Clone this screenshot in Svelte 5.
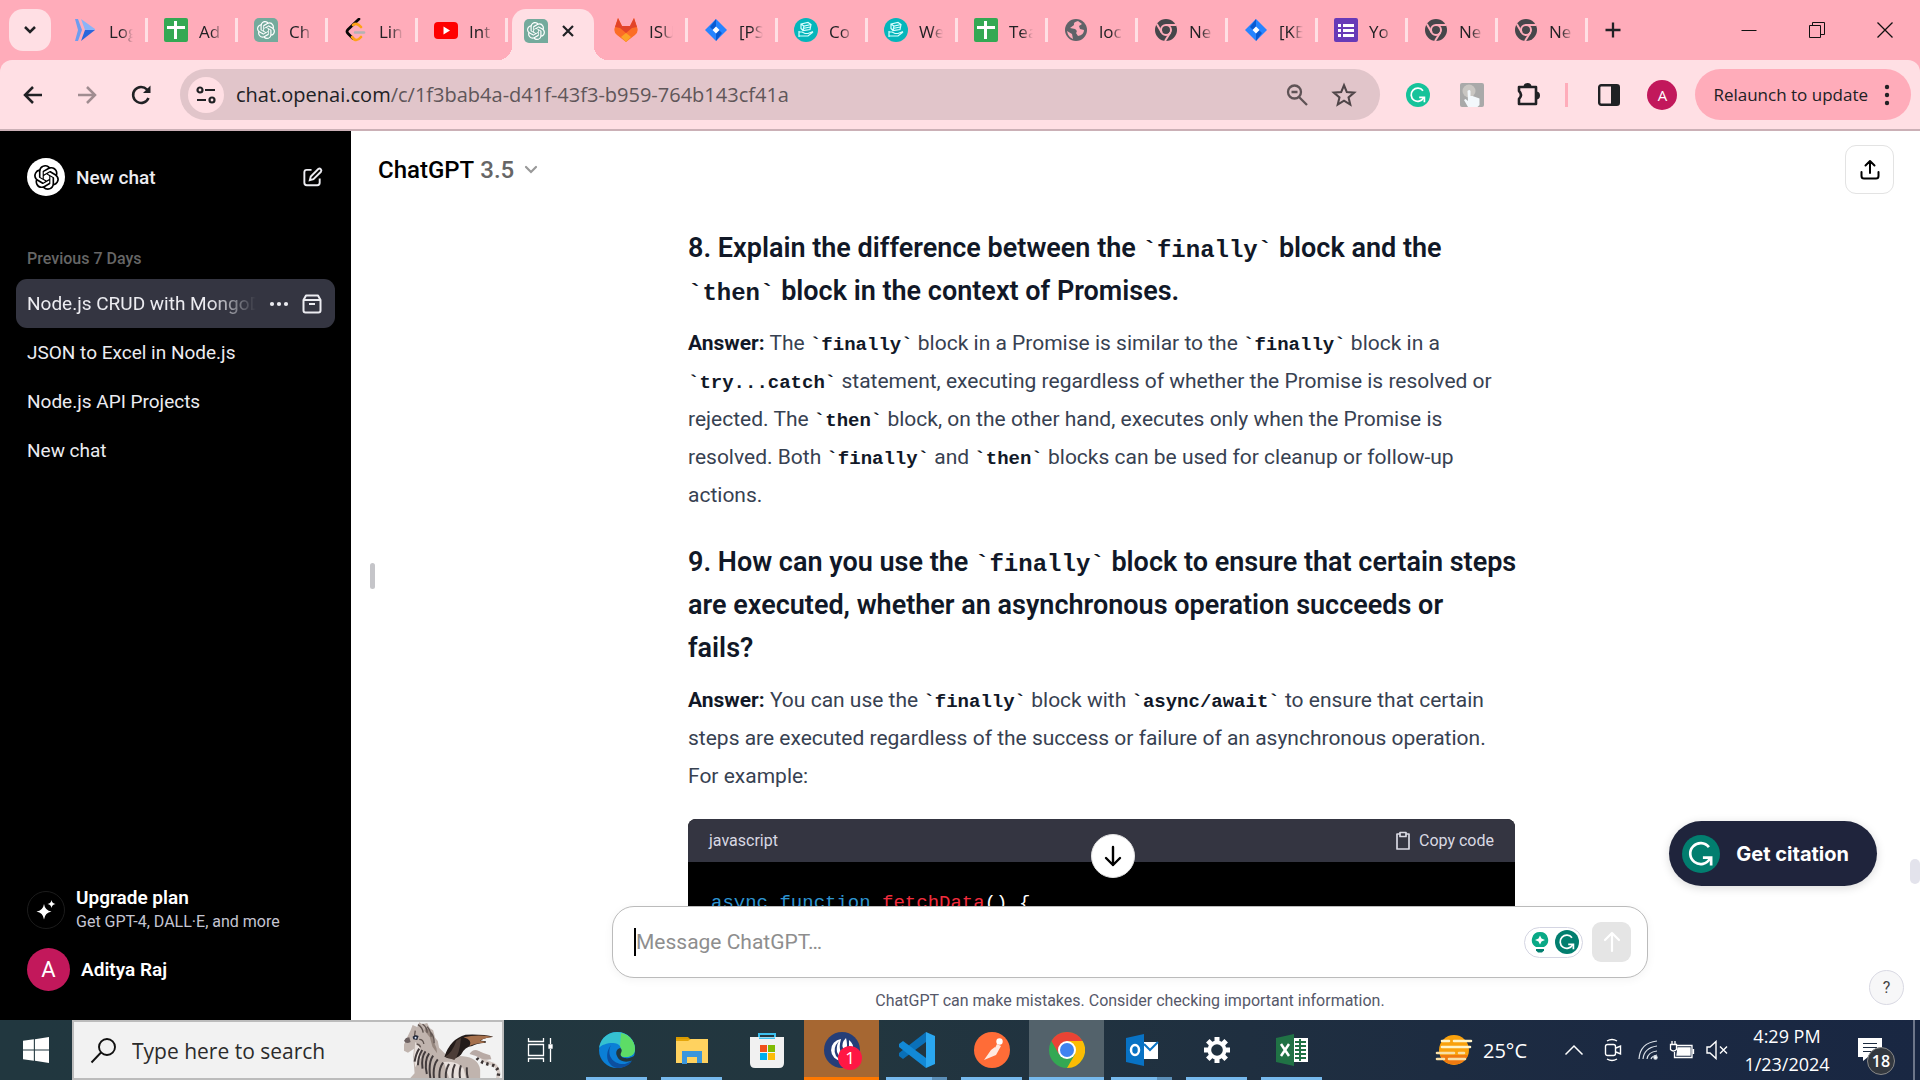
<script lang="ts">
  type Tab = { icon: string; title: string };
  const tabsBefore: Tab[] = [
    { icon: 'flow', title: 'Log' },
    { icon: 'sheets', title: 'Ad' },
    { icon: 'gpt', title: 'Ch' },
    { icon: 'leet', title: 'Lin' },
    { icon: 'youtube', title: 'Int' }
  ];
  const tabsAfter: Tab[] = [
    { icon: 'gitlab', title: 'ISU' },
    { icon: 'jira', title: '[PS' },
    { icon: 'coin', title: 'Co' },
    { icon: 'coin', title: 'We' },
    { icon: 'sheets', title: 'Tea' },
    { icon: 'globe', title: 'loc' },
    { icon: 'chrome', title: 'Ne' },
    { icon: 'jira', title: '[KE' },
    { icon: 'forms', title: 'Yo' },
    { icon: 'chrome', title: 'Ne' },
    { icon: 'chrome', title: 'Ne' }
  ];
  const chats = ['Node.js CRUD with MongoD', 'JSON to Excel in Node.js', 'Node.js API Projects', 'New chat'];
  const apps = [
    { name: 'Microsoft Edge', icon: 'edge', state: 'open' },
    { name: 'File Explorer', icon: 'explorer', state: 'open' },
    { name: 'Microsoft Store', icon: 'store', state: '' },
    { name: 'Mattermost', icon: 'mattermost', state: 'alert' },
    { name: 'Visual Studio Code', icon: 'vscode', state: 'open multi' },
    { name: 'Postman', icon: 'postman', state: 'open' },
    { name: 'Google Chrome', icon: 'chromecolor', state: 'current' },
    { name: 'Outlook', icon: 'outlook', state: 'open multi' },
    { name: 'Settings', icon: 'gear', state: 'open' },
    { name: 'Excel', icon: 'excel', state: 'open' }
  ];
  const stripes = ['M112 80q-10 15-14 39', 'M121 84q-12 18-13 46', 'M131 88q-14 18-9 52', 'M142 94q-16 22-7 62', 'M154 101q-16 22-8 70', 'M168 112q-18 22-10 66', 'M184 122q-16 22-9 58', 'M202 126q-14 22-8 54', 'M220 127q-12 22-5 53', 'M238 130q-8 22 0 50', 'M256 136q-2 20 6 44'];
  let message = $state('');
</script>

{#snippet knot()}
  <path d="M22.2819 9.8211a5.9847 5.9847 0 0 0-.5157-4.9108 6.0462 6.0462 0 0 0-6.5098-2.9A6.0651 6.0651 0 0 0 4.9807 4.1818a5.9847 5.9847 0 0 0-3.9977 2.9 6.0462 6.0462 0 0 0 .7427 7.0966 5.98 5.98 0 0 0 .511 4.9107 6.051 6.051 0 0 0 6.5146 2.9001A5.9847 5.9847 0 0 0 13.2599 24a6.0557 6.0557 0 0 0 5.7718-4.2058 5.9894 5.9894 0 0 0 3.9977-2.9001 6.0557 6.0557 0 0 0-.7475-7.0729zm-9.022 12.6081a4.4755 4.4755 0 0 1-2.8764-1.0408l.1419-.0804 4.7783-2.7582a.7948.7948 0 0 0 .3927-.6813v-6.7369l2.02 1.1686a.071.071 0 0 1 .038.052v5.5826a4.504 4.504 0 0 1-4.4945 4.4944zm-9.6607-4.1254a4.4708 4.4708 0 0 1-.5346-3.0137l.142.0852 4.783 2.7582a.7712.7712 0 0 0 .7806 0l5.8428-3.3685v2.3324a.0804.0804 0 0 1-.0332.0615L9.74 19.9502a4.4992 4.4992 0 0 1-6.1408-1.6464zM2.3408 7.8956a4.485 4.485 0 0 1 2.3655-1.9728V11.6a.7664.7664 0 0 0 .3879.6765l5.8144 3.3543-2.0201 1.1685a.0757.0757 0 0 1-.071 0l-4.8303-2.7865A4.504 4.504 0 0 1 2.3408 7.872zm16.5963 3.8558L13.1038 8.364 15.1192 7.2a.0757.0757 0 0 1 .071 0l4.8303 2.7913a4.4944 4.4944 0 0 1-.6765 8.1042v-5.6772a.79.79 0 0 0-.407-.667zm2.0107-3.0231l-.142-.0852-4.7735-2.7818a.7759.7759 0 0 0-.7854 0L9.409 9.2297V6.8974a.0662.0662 0 0 1 .0284-.0615l4.8303-2.7866a4.4992 4.4992 0 0 1 6.6802 4.66zM8.3065 12.863l-2.02-1.1638a.0804.0804 0 0 1-.038-.0567V6.0742a4.4992 4.4992 0 0 1 7.3757-3.4537l-.142.0805L8.704 5.459a.7948.7948 0 0 0-.3927.6813zm1.0976-2.3654l2.602-1.4998 2.6069 1.4998v2.9994l-2.5974 1.4997-2.6067-1.4997Z" />
{/snippet}

{#snippet grammarly(color: string)}
  <circle cx="12" cy="12" r="12" fill={color} />
  <g fill="none" stroke="#fff" stroke-width="1.7"><path d="M17 7.7a6.6 6.6 0 1 0 .6 7.2" /><path d="M13.2 14.3h5.2v5" /></g>
{/snippet}

{#snippet favicon(kind: string)}
  <svg class="favicon" viewBox="0 0 24 24" aria-hidden="true">
    {#if kind === 'flow'}
      <path d="M1 1h3l4 11-4 11H1l3-11z" fill="#6d9df0" /><path d="M7 1l14 10v1H11z" fill="#8ab4f8" /><path d="M7 23l14-11H11z" fill="#2a66dc" />
    {:else if kind === 'sheets'}
      <rect width="24" height="24" rx="2" fill="#34a853" /><path d="M10 3h3v5h8v3h-8v10h-3V11H3V8h7z" fill="#fff" />
    {:else if kind === 'gpt'}
      <path d="M5 0h14a5 5 0 0 1 5 5v19H5a5 5 0 0 1-5-5V5a5 5 0 0 1 5-5z" fill="#74aa9c" /><g fill="#fff" transform="translate(3 3) scale(.75)">{@render knot()}</g>
    {:else if kind === 'leet'}
      <path d="M15 1L4 11.500q-2 2 0 4l5 5" fill="none" stroke="#070706" stroke-width="2.700" stroke-linecap="round" /><path d="M9 7q4-3 8 2M8 19q4 6 9 0" fill="none" stroke="#ffa116" stroke-width="2.700" stroke-linecap="round" /><path d="M11 14.500h9" stroke="#b3b3b3" stroke-width="2.500" stroke-linecap="round" />
    {:else if kind === 'youtube'}
      <rect y="4" width="24" height="17" rx="4" fill="#f00" /><path d="M9.500 8.500l6.500 4-6.500 4z" fill="#fff" />
    {:else if kind === 'gitlab'}
      <path d="M1 9L4 0l4 8h8l4-8 3 9q2 5-2 8l-9 7-9-7q-4-3-2-8z" fill="#fc6d26" /><path d="M1 9L4 0l4 8h8l4-8 3 9-5 1-6 5-6-5z" fill="#e24329" /><path d="M7 19l5-4 5 4-5 5z" fill="#fca326" />
    {:else if kind === 'jira'}
      <path d="M12 1l11 11-11 11L1 12z" fill="#2684ff" /><path d="M12 1v8l-3 3-3-3zM12 23v-8l3-3 3 3z" fill="#0b5ad1" /><path d="M12 8.500l3.500 3.500-3.500 3.500L8.500 12z" fill="#fff" />
    {:else if kind === 'coin'}
      <circle cx="12" cy="12" r="12" fill="#05b6bb" /><g fill="none" stroke="#d9ffff" stroke-width="1.200"><path d="M7 6l7-1.500 3 2-1 5-7 1-2-2zM7 6l3 2 7-1.500M10 8l-1 4.500M9 10.500l7-1.500M5 14h3l3 1.500h3l5-2M5 18h9l5-4M5 13v6" /></g>
    {:else if kind === 'globe'}
      <circle cx="12" cy="12" r="11" fill="#5f6368" /><path d="M14 3q-5 1-4 4l-4 3 5 1q3 2 1 4l2 3q6-1 6-6l-4-1-1-3 3-2zM3 13l5 3 1 5q-5-2-6-8z" fill="#ffacba" />
    {:else if kind === 'chrome'}
      <circle cx="12" cy="12" r="11" fill="#46464a" /><circle cx="12" cy="12" r="5" fill="none" stroke="#ffacba" stroke-width="2" /><path d="M12 7h10M7.700 14.500L2.800 6M16.300 14.500L11 23" stroke="#ffacba" stroke-width="2" />
    {:else if kind === 'forms'}
      <rect width="24" height="24" rx="2" fill="#673ab7" /><path d="M4 6h3v3H4zm5 0h11v3H9zM4 11h3v3H4zm5 0h11v3H9zM4 16h3v3H4zm5 0h11v3H9z" fill="#fff" />
    {/if}
  </svg>
{/snippet}

{#snippet tab(t: Tab)}
  <button class="tab" role="tab" aria-selected="false">
    {@render favicon(t.icon)}<span class="tab-title">{t.title}</span>
  </button>
{/snippet}

<div class="window">
  <header class="browser">
    <div class="tabstrip">
      <button class="tab-search" aria-label="Search tabs"><svg width="14" height="10" viewBox="0 0 14 10"><path d="M2 2l5 5 5-5" fill="none" stroke="#202124" stroke-width="2.500" /></svg></button>
      <div class="tabs" role="tablist">
        {#each tabsBefore as t}{@render tab(t)}{/each}
        <div class="tab active" role="tab" aria-selected="true" tabindex="0">
          {@render favicon('gpt')}
          <button class="bare" aria-label="Close tab"><svg width="16" height="16" viewBox="0 0 16 16"><path d="M3 3l10 10M13 3L3 13" stroke="#202124" stroke-width="2.200" /></svg></button>
        </div>
        {#each tabsAfter as t}{@render tab(t)}{/each}
      </div>
      <button class="bare new-tab" aria-label="New tab"><svg width="18" height="18" viewBox="0 0 18 18"><path d="M9 1.500v15M1.500 9h15" stroke="#202124" stroke-width="2.300" /></svg></button>
      <div class="win-controls">
        <button class="bare" aria-label="Minimize"><svg width="18" height="18" viewBox="0 0 18 18"><path d="M1.500 9.500h15" stroke="#111" /></svg></button>
        <button class="bare" aria-label="Restore"><svg width="18" height="18" viewBox="0 0 18 18" fill="none" stroke="#111"><path d="M1.500 4.500h11v12h-11zM4.500 4.500v-3h12v12h-4" /></svg></button>
        <button class="bare" aria-label="Close"><svg width="18" height="18" viewBox="0 0 18 18"><path d="M1.500 1.500l15 15M16.500 1.500l-15 15" stroke="#111" stroke-width="1.300" /></svg></button>
      </div>
    </div>

    <div class="toolbar">
      <nav class="nav">
        <button class="bare" aria-label="Back"><svg width="22" height="22" viewBox="0 0 22 22"><path d="M20 11H4M11 3l-8 8 8 8" fill="none" stroke="#202124" stroke-width="2.500" /></svg></button>
        <button class="bare" aria-label="Forward"><svg width="22" height="22" viewBox="0 0 22 22"><path d="M2 11h16M11 3l8 8-8 8" fill="none" stroke="#a08c90" stroke-width="2.500" /></svg></button>
        <button class="bare" aria-label="Reload"><svg width="22" height="22" viewBox="0 0 22 22"><path d="M18.500 14a8 8 0 1 1-1.500-8.500l2 2" fill="none" stroke="#202124" stroke-width="2.500" /><path d="M20.500 1.500v7.500H13z" fill="#202124" /></svg></button>
      </nav>
      <div class="omnibox">
        <button class="site" aria-label="Site information"><svg width="20" height="20" viewBox="0 0 20 20" fill="none" stroke="#202124" stroke-width="2.200"><circle cx="4" cy="5" r="2.500" /><path d="M9 5h10M1 15h9" /><circle cx="16" cy="15" r="2.500" /></svg></button>
        <a class="url" href="#chat"><span class="host">chat.openai.com</span>/c/1f3bab4a-d41f-43f3-b959-764b143cf41a</a>
        <button class="bare" aria-label="Zoom"><svg width="24" height="24" viewBox="0 0 24 24" fill="none" stroke="#5f5356" stroke-width="2.300"><circle cx="9.500" cy="9" r="6.500" /><path d="M6.500 9h6M14 14l8 8" /></svg></button>
        <button class="bare" aria-label="Bookmark this tab"><svg width="26" height="26" viewBox="0 0 24 24"><path d="M12 3l2.600 6.300 6.800.500-5.200 4.400 1.600 6.700L12 17.300 6.200 20.900l1.600-6.700-5.200-4.400 6.800-.500z" fill="none" stroke="#4f4548" stroke-width="1.900" /></svg></button>
      </div>
      <div class="extensions">
        <button class="bare" aria-label="Grammarly"><svg width="24" height="24" viewBox="0 0 24 24">{@render grammarly('#15c39a')}</svg></button>
        <button class="bare" aria-label="Clicker"><svg width="24" height="24" viewBox="0 0 24 24"><rect width="24" height="24" rx="2" fill="#a9a9a9" /><circle cx="9" cy="8" r="6.500" fill="#c9c6c2" /><path d="M7.500 8q2-2 3 0v5h2l7 2.500V22l-2 2H8l-4-7 1.500-1L8 18z" fill="#f3f8fc" /></svg></button>
        <button class="bare" aria-label="Extensions"><svg width="28" height="28" viewBox="0 0 28 28"><path d="M5 6h17v17H5v-5q4-4 0-8z" fill="none" stroke="#202124" stroke-width="2.600" stroke-linejoin="round" /><path d="M9.500 6a4 4 0 0 1 8 0zM22 10.500a4 4 0 0 1 0 8z" fill="#202124" /></svg></button>
        <span class="divider"></span>
        <button class="bare" aria-label="Side panel"><svg width="22" height="22" viewBox="0 0 22 22"><rect x="1.200" y="1.200" width="19.600" height="19.600" rx="2" fill="none" stroke="#202124" stroke-width="2.400" /><path d="M13 1h8v20h-8z" fill="#202124" /></svg></button>
        <button class="profile" aria-label="Profile">A</button>
      </div>
      <button class="relaunch">Relaunch to update <svg width="6" height="22" viewBox="0 0 6 22" fill="#202124"><circle cx="3" cy="3" r="2.200" /><circle cx="3" cy="11" r="2.200" /><circle cx="3" cy="19" r="2.200" /></svg></button>
    </div>
  </header>

  <div class="page">
    <aside class="sidebar">
      <button class="side-row new-chat">
        <span class="logo"><svg width="25" height="25" viewBox="0 0 24 24">{@render knot()}</svg></span>
        <span class="grow">New chat</span>
        <svg width="23" height="23" viewBox="0 0 24 24" fill="none" stroke="#ececf1" stroke-width="2"><path d="M11 4H6a2.500 2.500 0 0 0-2.500 2.500v11A2.500 2.500 0 0 0 6 20h11a2.500 2.500 0 0 0 2.500-2.500V13" /><path d="M18 3.200a2 2 0 0 1 2.800 2.800L13 13.800l-3.800 1 1-3.800z" /></svg>
      </button>
      <h2>Previous 7 Days</h2>
      <ul>
        {#each chats as chat, i}
          <li class:selected={i === 0}>
            <a href="#chat">{chat}</a>
            {#if i === 0}
              <button class="bare" aria-label="More"><svg width="20" height="20" viewBox="0 0 20 20" fill="#ececf1"><circle cx="3" cy="10" r="2.100" /><circle cx="10" cy="10" r="2.100" /><circle cx="17" cy="10" r="2.100" /></svg></button>
              <button class="bare" aria-label="Archive"><svg width="20" height="20" viewBox="0 0 20 20" fill="none" stroke="#ececf1" stroke-width="2" stroke-linejoin="round"><path d="M1.500 6L4 1.500h12L18.500 6v10.500a2 2 0 0 1-2 2h-13a2 2 0 0 1-2-2zM1.500 6h17M7 10h6" /></svg></button>
            {/if}
          </li>
        {/each}
      </ul>
      <button class="side-row upgrade">
        <span class="ring"><svg width="20" height="20" viewBox="0 0 20 20" fill="#fff"><path d="M8 4q1 6.500 7.500 7.500Q9 12.500 8 19.500 7 12.500.500 11.500 7 10.500 8 4zM15.500 0q.500 3.500 4 4-3.500.500-4 4-.500-3.500-4-4 3.500-.500 4-4z" /></svg></span>
        <span class="upgrade-text"><strong>Upgrade plan</strong><small>Get GPT-4, DALL·E, and more</small></span>
      </button>
      <button class="side-row account"><span class="avatar">A</span><strong>Aditya Raj</strong></button>
    </aside>

    <main>
      <div class="topbar">
        <button class="bare model">ChatGPT <span>3.5</span><svg width="14" height="10" viewBox="0 0 14 10"><path d="M2 2l5 5 5-5" fill="none" stroke="#999" stroke-width="2.200" stroke-linecap="round" /></svg></button>
        <button class="share" aria-label="Share"><svg width="22" height="22" viewBox="0 0 22 22" fill="none" stroke="#000" stroke-width="2" stroke-linecap="round" stroke-linejoin="round"><path d="M11 14V2.500M6.500 6.500L11 2l4.500 4.500M2.500 13v4a2.500 2.500 0 0 0 2.500 2.500h12a2.500 2.500 0 0 0 2.500-2.500v-4" /></svg></button>
      </div>
      <div class="thread">
        <article>
          <h3>8. Explain the difference between the <code>`finally`</code> block and the <br /><code>`then`</code> block in the context of Promises.</h3>
          <p><strong>Answer:</strong> The <code>`finally`</code> block in a Promise is similar to the <code>`finally`</code> block in a <br /><code>`try...catch`</code> statement, executing regardless of whether the Promise is resolved or <br />rejected. The <code>`then`</code> block, on the other hand, executes only when the Promise is <br />resolved. Both <code>`finally`</code> and <code>`then`</code> blocks can be used for cleanup or follow-up <br />actions.</p>
          <h3>9. How can you use the <code>`finally`</code> block to ensure that certain steps <br />are executed, whether an asynchronous operation succeeds or <br />fails?</h3>
          <p><strong>Answer:</strong> You can use the <code>`finally`</code> block with <code>`async/await`</code> to ensure that certain <br />steps are executed regardless of the success or failure of an asynchronous operation. <br />For example:</p>
          <div class="codeblock">
            <div class="code-head"><span>javascript</span><button class="bare copy"><svg width="16" height="20" viewBox="0 0 16 20" fill="none" stroke="#d9d9e3" stroke-width="1.700" stroke-linejoin="round"><path d="M5 3H2v15h12V3h-3M5 1.500h6v4H5z" /></svg>Copy code</button></div>
            <pre><code><span class="kw">async</span> <span class="kw">function</span> <span class="fn">fetchData</span>() {'{'}</code></pre>
          </div>
        </article>
        <button class="to-bottom" aria-label="Scroll to bottom"><svg width="20" height="24" viewBox="0 0 20 24" fill="none" stroke="#000" stroke-width="2.400" stroke-linecap="round" stroke-linejoin="round"><path d="M10 3v18M3 14l7 7 7-7" /></svg></button>
      </div>
      <div class="bottom">
        <div class="composer">
          <span class="caret"></span>
          <input type="text" aria-label="Message" placeholder="Message ChatGPT…" bind:value={message} />
          <button class="pill" aria-label="Writing assistant">
            <svg width="18" height="22" viewBox="0 0 18 22"><path d="M9 1a8 8 0 0 1 4 15H5A8 8 0 0 1 9 1z" fill="#09a986" /><path d="M5 18h8v1.500L11 21.500H7L5 19.500z" fill="#027e6f" /><path d="M9 4.500l1.500 3L14 9l-3.500 1.500L9 13.500l-1.500-3L4 9l3.500-1.500z" fill="#fff" /></svg>
            <svg width="24" height="24" viewBox="0 0 24 24">{@render grammarly('#027e6f')}</svg>
          </button>
          <button class="send" aria-label="Send message"><svg width="20" height="22" viewBox="0 0 20 22" fill="none" stroke="#fff" stroke-width="2.200" stroke-linecap="round" stroke-linejoin="round"><path d="M10 20V2M3 9l7-7 7 7" /></svg></button>
        </div>
        <p class="notice">ChatGPT can make mistakes. Consider checking important information.</p>
      </div>
      <span class="handle"></span>
      <span class="scroll-thumb"></span>
      <button class="citation"><svg width="38" height="38" viewBox="0 0 24 24">{@render grammarly('#027e6f')}</svg>Get citation</button>
      <button class="help" aria-label="Help">?</button>
    </main>
  </div>

  <footer class="taskbar">
    <button class="start" aria-label="Start"><svg width="26" height="26" viewBox="0 0 24 24" fill="#fff"><path d="M0 3.500l10-1.400v9.400H0zM11 2l13-2v11.500H11zM0 12.500h10v9.400L0 20.500zM11 12.500h13V24l-13-2z" /></svg></button>
    <label class="search">
      <svg width="27" height="27" viewBox="0 0 27 27" fill="none" stroke="#111" stroke-width="1.900"><circle cx="17" cy="10" r="8" /><path d="M11 15.500L1.500 25.500" /></svg>
      <input type="text" placeholder="Type here to search" />
      <svg class="zebra" width="98" height="60" viewBox="66 0 296 180" preserveAspectRatio="none" aria-hidden="true">
        <path d="M272 96q14-10 24 0 6 22 32 28 20 4 24 28l-6 34" fill="none" stroke="#d6cbc6" stroke-width="10" /><path d="M286 108q14 16 42 20 20 4 24 26l-6 34" fill="none" stroke="#3b3333" stroke-width="10" stroke-dasharray="7 10" />
        <path d="M264 96q10-16 26-10 16 8 36 14l4 12q-22 4-34-4-14-8-32-12z" fill="#b8aaa5" />
        <path d="M76 45l10-20 6-16 14 6 6-14 10 6 14-4 8 16 10 6 6 22 8 10 4 20 22 22 50 4q46 4 52 40v37H74l24-26-4-50 2-24-18 12-12-6-2-14z" fill="#c0b4ae" />
        <path d="M100 60l14 16 4 30-18 30-4-30zM186 120q40-6 60 20l10 40h-50z" fill="#e8e0dc" />
        <path d="M130 16q24 10 26 44l8 18 2 16-14-20-8-28-16-20z" fill="#96877f" />
        <path d="M188 104q18-54 64-66 54-2 84 6-34 4-38 12 22 0 14 6-30 2-40 10-22 2-34 26-22 20-50 6z" fill="#231b19" /><path d="M246 46q42-10 88-1-34 5-38 12 20 0 12 5-32 3-44 10 10-18-18-26z" fill="#a5704c" /><path d="M190 104q22-12 34-48l14-8q-4 50-20 66z" fill="#4c3d37" />
        {#each stripes as d}<path {d} fill="none" stroke="#423b3c" stroke-width="6" />{/each}
        <path d="M108 8q14 8 16 24M122 6q14 10 14 26M136 14q12 14 12 30M148 32q10 14 9 32M100 26l-2 14 8 6M104 66q10 2 12 10M112 52q12 0 14 14" fill="none" stroke="#5f5450" stroke-width="4" /><path d="M66 56q6 12 20 4l-4-14-10 2z" fill="#6c6060" /><path d="M92 44q8-8 18-2l-4 12-12-2z" fill="#222a3b" /><circle cx="101" cy="47" r="3" fill="#dbe8ff" />
      </svg>
    </label>
    <button class="bare task-view" aria-label="Task view"><svg width="26" height="26" viewBox="0 0 26 26" fill="none" stroke="#fff" stroke-width="1.300"><path d="M1.500 7.500h15v11h-15zM1.500 1v3.500h15V1M1.500 25v-3.500h15V25M23.500 1v6M23.500 12v13" /><path d="M22 8h3v3h-3z" fill="#fff" /></svg></button>
    <div class="apps">
      {#each apps as app}
        <button class="app {app.state}" aria-label={app.name}>
          <svg width="36" height="36" viewBox="0 0 36 36" aria-hidden="true">
            {#if app.icon === 'edge'}
              <circle cx="18" cy="18" r="18" fill="#0b7fd6" /><path d="M0 16C2 5 10 0 18 0c11 0 18 8 18 17 0 6-5 8-9 8-5 0-7-2-5-5 2-4-2-9-8-9C8 11 2 13 0 16z" fill="#35c1d0" /><path d="M22 1c9 2 14 9 14 16 0 6-5 8-9 8-5 0-7-2-5-5 1-2 0-4-1-6z" fill="#5ddc66" /><path d="M12 13c-5 10 2 20 14 19l7-3c-4 6-10 7-15 7C8 34 5 22 12 13z" fill="#0c4fa0" /><path d="M22 21c-2 4 4 7 11 4l2-1 2 3-3 1c-6 3-14 2-16-4-2-4 0-7 3-8 2 1 2 3 1 5z" fill="#22383f" />
            {:else if app.icon === 'explorer'}
              <path d="M2 5h12l3 3H2z" fill="#d99a00" /><path d="M2 7h32v24H2z" fill="#ffd25f" /><path d="M2 7h15l-3 2H2z" fill="#e5a50a" /><path d="M8 19h20v12h-5v-6H13v7H8z" fill="#3a96dd" />
            {:else if app.icon === 'store'}
              <path d="M10 7V2h16v5" fill="none" stroke="#3cc0ee" stroke-width="2" /><path d="M1 5h34v26q0 5-5 5H6q-5 0-5-5z" fill="#f1f1f1" /><path d="M10 7V5.500h16V7" fill="#3cc0ee" /><path d="M11 13h7v7h-7z" fill="#f1511b" /><path d="M19 13h7v7h-7z" fill="#80bb03" /><path d="M11 21h7v7h-7z" fill="#00adef" /><path d="M19 21h7v7h-7z" fill="#fbbc09" />
            {:else if app.icon === 'mattermost'}
              <circle cx="18" cy="18" r="18" fill="#253e78" /><path d="M17 7a11 11 0 1 0 12 12q-2 4-7 4-9-1-5-16z" fill="#fff" /><path d="M15 9q-7 7-3 15 4 5 11 3-8-1-10-7-1-6 2-11z" fill="#253e78" /><path d="M22 6q2 7 0 12l-3-2q-2-5 3-10zM25 8q5 4 4 10l-4-2z" fill="#fff" />
            {:else if app.icon === 'vscode'}
              <path d="M27 0l9 4v28l-9 4z" fill="#2aa7f0" /><path d="M27 0v10L4 27l-4-3v-3z" fill="#0a70b8" /><path d="M27 36V26L4 9l-4 3v3z" fill="#1289d6" />
            {:else if app.icon === 'postman'}
              <circle cx="18" cy="18" r="18" fill="#ff6c37" /><circle cx="25.500" cy="9.500" r="3.200" fill="#fff" /><path d="M23 12l4 2-5 9-12 5 9-8zM10 28l7-10 4-3 1 4z" fill="#ffe9e0" />
            {:else if app.icon === 'chromecolor'}
              <circle cx="18" cy="18" r="18" fill="#34a853" /><path d="M2.400 9A18 18 0 0 1 33.600 9H18v9l-7.800 4.500z" fill="#ea4335" /><path d="M33.600 9A18 18 0 0 1 18 36l7.800-13.500L18 9z" fill="#fbbc04" /><circle cx="18" cy="18" r="9" fill="#fff" /><circle cx="18" cy="18" r="7" fill="#3f83f0" />
            {:else if app.icon === 'outlook'}
              <path d="M18 10h16v17H18z" fill="#fff" /><path d="M20 12l6 6 8-8" fill="none" stroke="#0872c4" stroke-width="2" /><path d="M2 6l18-4v32L2 30z" fill="#0872c4" /><ellipse cx="11" cy="18" rx="4" ry="5" fill="none" stroke="#fff" stroke-width="2.500" />
            {:else if app.icon === 'gear'}
              <path d="M18 5v26M5 18h26M8.800 8.800l18.400 18.400M27.200 8.800L8.800 27.200" stroke="#fff" stroke-width="5" /><circle cx="18" cy="18" r="9.500" fill="#fff" /><circle cx="18" cy="18" r="5.800" fill="#20313f" />
            {:else}
              <path d="M18 6h16v24H18z" fill="#fff" /><path d="M21 10h11M21 14h11M21 18h11M21 22h11M21 26h11M26 7v22" stroke="#207245" stroke-width="2" /><path d="M2 6l18-4v32L2 30z" fill="#207245" /><path d="M7 12l8 12M15 12L7 24" stroke="#fff" stroke-width="2.500" />
            {/if}
          </svg>
          {#if app.icon === 'mattermost'}<span class="app-badge">1</span>{/if}
        </button>
      {/each}
    </div>
    <div class="tray">
      <button class="bare weather"><svg width="38" height="32" viewBox="0 0 38 32"><circle cx="19" cy="16" r="15" fill="#f9a10c" /><path d="M5 21a15 15 0 0 0 28 0z" fill="#f07a10" /><path d="M7 7h7M19 7h17M7 13h28" stroke="#fff3c8" stroke-width="2.600" stroke-linecap="round" /><path d="M2 19h17M24 19h5M2 25h7M14 25h16" stroke="#f8dfa8" stroke-width="2.600" stroke-linecap="round" /></svg><span>25°C</span></button>
      <button class="bare tray-icon" aria-label="Show hidden icons"><svg width="20" height="12" viewBox="0 0 20 12"><path d="M1.500 10.500L10 2l8.500 8.500" fill="none" stroke="#fff" stroke-width="1.500" /></svg></button>
      <button class="bare tray-icon" aria-label="Meet now"><svg width="18" height="24" viewBox="0 0 18 24" fill="none" stroke="#fff" stroke-width="1.400"><rect x="1.500" y="6.500" width="10" height="11" rx="2" /><path d="M12 10l4.500-2v8L12 14M3 3q5-3 10 0M3 21q5 3 10 0" /></svg></button>
      <button class="bare" aria-label="Network"><svg width="20" height="20" viewBox="0 0 20 20" fill="none" stroke="#dde3ea" stroke-width="1.200"><path d="M1 19Q2 3 19 1M5 19Q6 8 19 6M9 19q1-7 10-8M13 19q1-3 6-4" /><circle cx="17.500" cy="17.500" r="1.600" fill="#fff" /></svg></button>
      <button class="bare" aria-label="Battery"><svg width="26" height="18" viewBox="0 0 26 18" fill="none" stroke="#fff" stroke-width="1.300"><path d="M7 4.500h16v12H5.500V11M24.500 8v5" /><path d="M9 7h12v7H8z" fill="#fff" /><path d="M1.500 3.500h6v5q-3 3-6 0zM3 3.500V0M6 3.500V0" /></svg></button>
      <button class="bare" aria-label="Volume muted"><svg width="22" height="20" viewBox="0 0 22 20" fill="none" stroke="#fff" stroke-width="1.400"><path d="M1 7h3l6-5.500v17L4 13H1zM14 6.500l7 7M21 6.500l-7 7" /></svg></button>
      <button class="bare clock"><span>4:29 PM</span><span>1/23/2024</span></button>
      <button class="bare notes" aria-label="Notifications"><svg width="24" height="24" viewBox="0 0 24 24"><path d="M0 0h24v19H10l-5 4v-4H0z" fill="#fff" /><path d="M5 5.500h14M5 9.500h14M5 13.500h9" stroke="#1c2b40" stroke-width="1.200" /></svg><span>18</span></button>
    </div>
  </footer>
</div>

<style>
  :global(body) { margin: 0; }
  * { box-sizing: border-box; }
  button, input { font: inherit; color: inherit; }
  svg { display: block; flex: none; }
  ul, p, h2, h3, pre { margin: 0; padding: 0; }
  .bare { background: none; border: 0; padding: 0; display: flex; align-items: center; justify-content: center; }
  .window { display: flex; flex-direction: column; height: 100vh; font-family: Roboto, "Liberation Sans", sans-serif; overflow: hidden; }

  /* Browser chrome */
  .browser { background: #ffacba; border-bottom: 2px solid #cbb0b6; font-family: "Open Sans", "Noto Sans", sans-serif; color: #202124; }
  .tabstrip { display: flex; align-items: center; height: 60px; padding-left: 9px; }
  .tab-search { width: 42px; height: 42px; border: 0; border-radius: 14px; background: #ffdfe4; display: flex; align-items: center; justify-content: center; padding: 0; margin-right: 7px; }
  .tabs { display: flex; align-self: stretch; }
  .tab { position: relative; width: 90px; padding: 0 0 0 16px; display: flex; align-items: center; gap: 11px; background: none; border: 0; font-size: 17px; text-align: left; }
  .tab::after { content: ""; position: absolute; right: 0; width: 3px; height: 24px; background: #ffdfe4; }
  .favicon { width: 24px; height: 24px; }
  .tab-title { width: 24px; white-space: nowrap; padding-top: 2px; mask-image: linear-gradient(90deg, #000 50%, transparent); }
  .tab.active { width: 82px; margin: 9px 4px 0; padding: 0 0 8px 12px; gap: 12px; background: #ffdfe4; border-radius: 14px 14px 0 0; }
  .tab.active::before, .tab.active::after { content: ""; position: absolute; bottom: 0; width: 14px; height: 14px; background: radial-gradient(circle at 0 0, transparent 14px, #ffdfe4 14px); }
  .tab.active::before { left: -14px; }
  .tab.active::after { right: -14px; background: radial-gradient(circle at 100% 0, transparent 14px, #ffdfe4 14px); }
  .new-tab { margin-left: 16px; }
  .win-controls { margin-left: auto; display: flex; gap: 50px; padding-right: 26px; }
  .toolbar { display: flex; align-items: center; height: 69px; padding: 0 9px 0 22px; background: #ffdfe4; border-radius: 12px 12px 0 0; }
  .nav { display: flex; gap: 32px; margin-right: 28px; }
  .omnibox { flex: 1; display: flex; align-items: center; height: 51px; padding: 0 23px 0 8px; border-radius: 26px; background: #e1c5ca; gap: 22px; }
  .site { width: 36px; height: 36px; border: 0; border-radius: 50%; background: #ffdfe4; padding: 0; display: flex; align-items: center; justify-content: center; margin-right: -10px; }
  .url { flex: 1; font-size: 20px; color: #5f5659; text-decoration: none; white-space: nowrap; }
  .host { color: #202124; }
  .extensions { display: flex; align-items: center; gap: 30px; padding: 0 18px 0 26px; }
  .divider { width: 3px; height: 24px; background: #ffacba; margin-left: -7px; }
  .profile { width: 30px; height: 30px; border: 0; border-radius: 50%; background: #c2185b; color: #fff; font-size: 15px; padding: 0; margin-left: -3px; }
  .relaunch { height: 51px; border: 0; border-radius: 26px; background: #ffacba; padding: 0 21px 0 18px; font-size: 17px; display: flex; align-items: center; gap: 16px; }

  /* Page */
  .page { flex: 1; display: flex; min-height: 0; }
  .sidebar { width: 351px; flex: none; background: #000; color: #ececf1; display: flex; flex-direction: column; padding: 19px 16px 20px; font-size: 19px; }
  .side-row { display: flex; align-items: center; gap: 11px; background: none; border: 0; padding: 0 11px; text-align: left; }
  .new-chat { height: 54px; font-weight: 500; }
  .logo, .ring { width: 38px; height: 38px; border-radius: 50%; display: flex; align-items: center; justify-content: center; flex: none; }
  .logo { background: #fff; }
  .ring { border: 1px solid #1c1c1c; }
  .grow { flex: 1; }
  .sidebar h2 { font-size: 16px; line-height: 20px; font-weight: 500; color: #666; padding: 45px 11px 10px; }
  .sidebar ul { list-style: none; flex: 1; }
  li { display: flex; align-items: center; gap: 13px; height: 49px; padding: 0 12px 0 11px; border-radius: 11px; }
  li.selected { background: #343541; }
  li a { flex: 1; min-width: 0; color: inherit; text-decoration: none; white-space: nowrap; line-height: 28px; }
  li.selected { padding-right: 13px; }
  li.selected a { mask-image: linear-gradient(90deg, #000 80%, transparent); }
  .upgrade { height: 56px; color: #fff; }
  .upgrade-text { display: flex; flex-direction: column; line-height: 24px; }
  strong { font-weight: 700; }
  .upgrade strong, .account strong { font-weight: 600; }
  small { font-size: 16px; color: #c5c5d2; }
  .account { height: 62px; color: #fff; }
  .avatar { width: 43px; height: 43px; border-radius: 50%; background: #c2185b; display: flex; align-items: center; justify-content: center; font-size: 22px; }

  main { position: relative; flex: 1; min-width: 0; background: #fff; display: flex; flex-direction: column; padding-right: 11px; }
  .topbar { display: flex; align-items: center; justify-content: space-between; padding: 14px 15px 0 27px; }
  .model { font-size: 24px; font-weight: 500; gap: 6px; color: #000; }
  .model span { color: #666; }
  .model svg { margin-left: 4px; }
  .share { width: 49px; height: 49px; border: 1px solid #e3e3e3; border-radius: 11px; background: #fff; display: flex; align-items: center; justify-content: center; padding: 0; }
  .thread { position: relative; flex: 1; min-height: 0; overflow: hidden; padding-top: 30px; }
  article { max-width: 1036px; margin: 0 auto; padding: 0 133px 0 76px; color: #374151; white-space: nowrap; }
  h3 { font-size: 27px; line-height: 43px; font-weight: 600; color: #111827; padding-top: 3px; margin-bottom: 11px; }
  article p { font-size: 21px; line-height: 38px; margin-bottom: 24px; }
  p strong, p code { color: #111827; }
  code { font-family: "Liberation Mono", monospace; line-height: 1; }
  p code { font-size: 19px; font-weight: 700; }
  h3 code { font-size: 24px; }
  .codeblock { background: #000; border-radius: 8px; overflow: hidden; color: #fff; }
  .code-head { display: flex; justify-content: space-between; align-items: center; height: 43px; padding: 0 21px; background: #343541; color: #d9d9e3; font-size: 16px; }
  .copy { gap: 8px; }
  pre { padding: 23px 23px; font-size: 19px; line-height: 32px; }
  .kw { color: #2e95d3; }
  .fn { color: #f22c3d; }
  .to-bottom { position: absolute; left: 50%; bottom: 28px; margin-left: -39px; width: 44px; height: 44px; border: 1px solid #e3e3e3; border-radius: 50%; background: #fff; padding: 0; display: flex; align-items: center; justify-content: center; }
  .bottom { height: 114px; }
  .composer { display: flex; align-items: center; max-width: 1036px; height: 72px; margin: 0 auto; padding: 0 16px 0 21px; border: 1px solid #bbb; border-radius: 22px; background: #fff; box-shadow: 0 2px 10px #0000000d; }
  .caret { width: 2px; height: 28px; background: #000; }
  .composer input { flex: 1; border: 0; outline: 0; padding: 0; font-size: 21px; background: none; }
  .composer input::placeholder { color: #8e8e8e; }
  .pill { display: flex; align-items: center; gap: 6px; width: 59px; height: 31px; border: 1px solid #d4d5e2; border-radius: 16px; background: #fff; padding: 0 6px; margin-right: 9px; }
  .send { width: 39px; height: 40px; border: 0; border-radius: 9px; background: #e5e5e5; padding: 0; display: flex; align-items: center; justify-content: center; }
  .notice { text-align: center; font-size: 16px; line-height: 20px; color: #565869; padding-top: 13px; }
  .handle { position: absolute; left: 19px; top: 432px; width: 5px; height: 26px; border-radius: 3px; background: #c5c5c9; }
  .scroll-thumb { position: absolute; right: 0; top: 728px; width: 10px; height: 25px; border-radius: 5px; background: #e3e3ec; }
  .citation { position: absolute; right: 43px; bottom: 134px; height: 65px; border: 0; border-radius: 33px; background: #1f243c; color: #fff; padding: 0 28px 0 13px; display: flex; align-items: center; gap: 16px; font: 700 20px Inter, sans-serif; box-shadow: 0 2px 10px #00000026; }
  .help { position: absolute; right: 16px; bottom: 15px; width: 35px; height: 35px; border: 1px solid #d9d9e3; border-radius: 50%; background: #f7f7f8; color: #444; font-size: 16px; padding: 0; }

  /* Taskbar */
  .taskbar { display: flex; align-items: stretch; height: 60px; background: linear-gradient(90deg, #21373f 0%, #22363f 45%, #1f2f40 65%, #1b2942 85%, #192742 100%); color: #fff; font-family: "Open Sans", "Noto Sans", sans-serif; }
  .start { width: 72px; border: 0; background: none; padding: 0; display: flex; align-items: center; justify-content: center; }
  .search { width: 432px; display: flex; align-items: center; gap: 15px; padding: 0 0 0 16px; background: #f2f2f2; border: 2px solid #bcbcbc; color: #2b2b2b; overflow: hidden; }
  .search input { flex: 1; min-width: 0; border: 0; padding: 2px 0 0; background: none; font-size: 21px; }
  .search input::placeholder { color: #2b2b2b; opacity: 1; }
  .zebra { align-self: flex-start; }
  .task-view { width: 75px; padding-right: 4px; }
  .apps { display: flex; }
  .app { position: relative; width: 75px; border: 0; background: none; padding: 0; display: flex; align-items: center; justify-content: center; }
  .app::after { content: ""; position: absolute; bottom: 0; left: 7px; right: 7px; height: 3px; }
  .app.open::after { background: #76b9ed; }
  .app.multi::after { background: linear-gradient(90deg, #76b9ed 76%, #5b8fb8 76%); }
  .app.alert { background: #a66732; }
  .app.alert::after { background: #ff7800; left: 0; right: 0; }
  .app.current { background: #53626b; }
  .app.current::after { background: #76b9ed; left: 0; right: 0; }
  .app-badge { position: absolute; left: 34px; top: 26px; width: 24px; height: 24px; line-height: 23px; border-radius: 50%; background: #ff1744; font-size: 17px; }
  .tray { margin-left: auto; display: flex; align-items: center; gap: 11px; padding-right: 19px; border-right: 2px solid #6d7689; margin-right: 5px; }
  .weather { gap: 10px; font-size: 20px; margin-right: 22px; }
  .tray-icon { width: 28px; }
  .clock { flex-direction: column; font-size: 18px; line-height: 28px; width: 96px; }
  .notes { position: relative; width: 48px; height: 60px; }
  .notes span { position: absolute; right: -1px; top: 27px; width: 28px; height: 28px; border: 1px solid #888; border-radius: 50%; background: #33383f; font-size: 16px; font-weight: 600; line-height: 26px; text-align: center; }
</style>
